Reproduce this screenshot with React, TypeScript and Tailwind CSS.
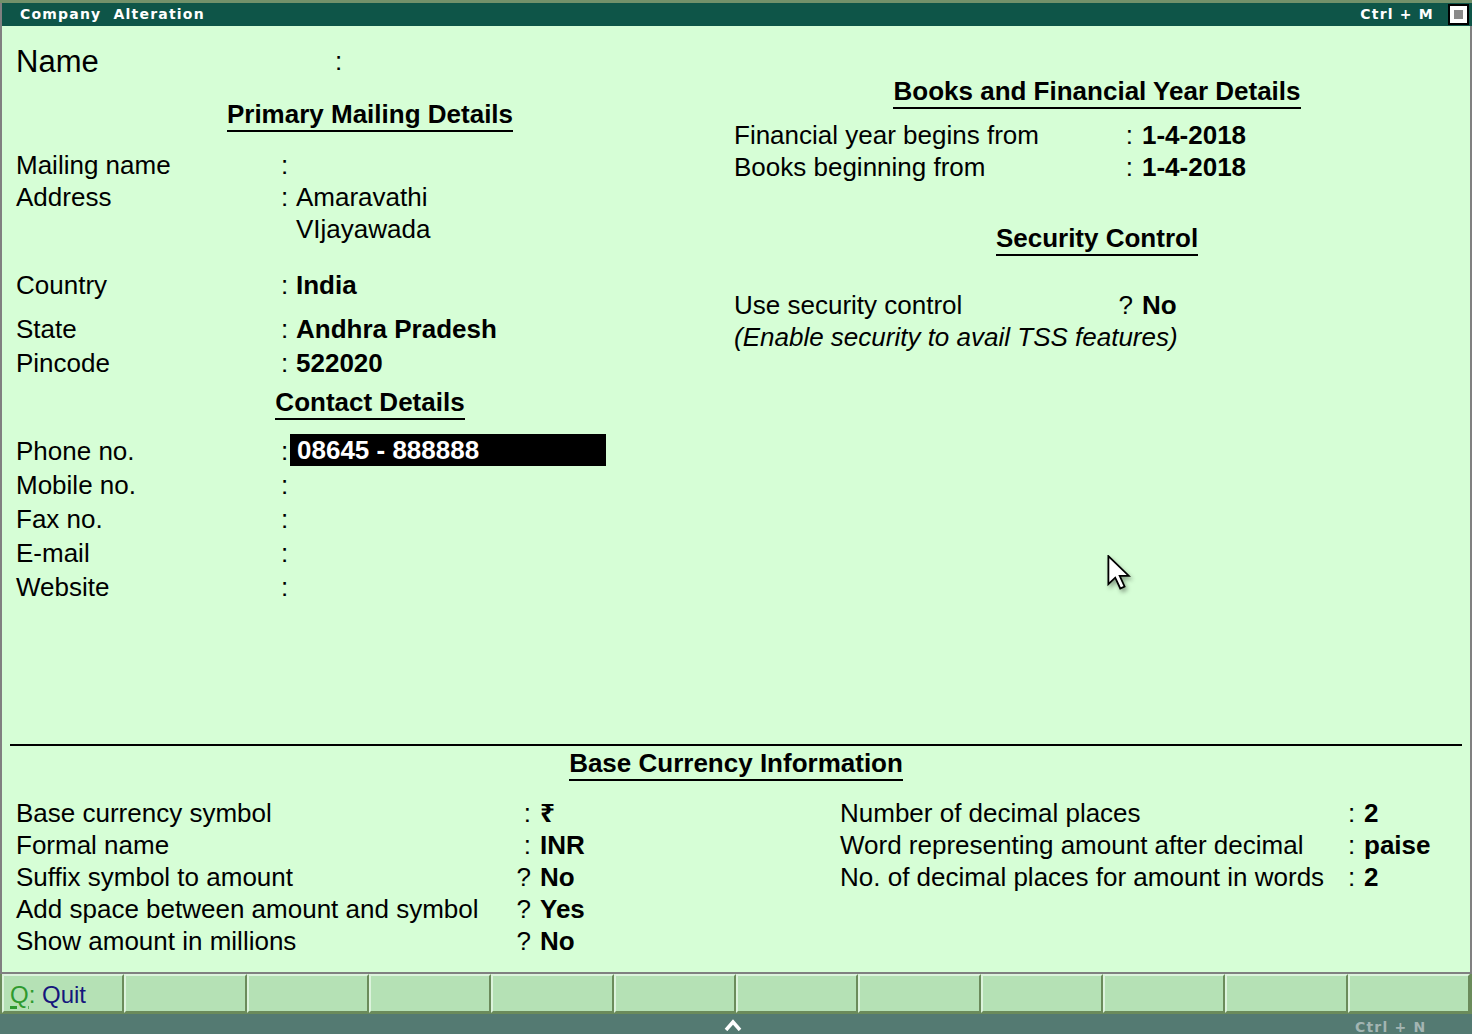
import React from "react";

const F = "font-['Liberation_Sans','Noto_Sans','DejaVu_Sans',sans-serif]";
const UI = "font-['DejaVu_Sans',sans-serif]";

function Heading({ text }: { text: string }) {
  return (
    <span className="inline-block leading-[28px] font-bold border-b-2 border-black">{text}</span>
  );
}

function LeftField({ label, value, bold }: { label: string; value?: string; bold?: boolean }) {
  return (
    <div className="flex h-[32px] items-center">
      <span className="w-[265px]">{label}</span>
      <span className="w-[15px]">:</span>
      <span className={bold ? "font-bold" : ""}>{value}</span>
    </div>
  );
}

function ContactField({ label, value }: { label: string; value?: string }) {
  return (
    <div className="flex h-[34px] items-start">
      <span className="w-[265px] leading-[34px]">{label}</span>
      <span className="w-[9px] leading-[34px]">:</span>
      {value ? (
        <span className="w-[316px] h-[32px] leading-[32px] bg-black text-white font-bold pl-[7px]">{value}</span>
      ) : null}
    </div>
  );
}

function RightField({ label, mark, value, bold = true }: { label: string; mark: string; value: string; bold?: boolean }) {
  return (
    <div className="flex h-[32px] items-center">
      <span className="w-[376px]">{label}</span>
      <span className="w-[32px] text-right pr-[9px]">{mark}</span>
      <span className={bold ? "font-bold" : ""}>{value}</span>
    </div>
  );
}

const baseLeft = [
  { label: "Base currency symbol", mark: ":", value: "₹" },
  { label: "Formal name", mark: ":", value: "INR" },
  { label: "Suffix symbol to amount", mark: "?", value: "No" },
  { label: "Add space between amount and symbol", mark: "?", value: "Yes" },
  { label: "Show amount in millions", mark: "?", value: "No" },
];

const baseRight = [
  { label: "Number of decimal places", value: "2" },
  { label: "Word representing amount after decimal", value: "paise" },
  { label: "No. of decimal places for amount in words", value: "2" },
];

export default function App() {
  return (
    <div className={`relative w-[1472px] h-[1034px] flex flex-col overflow-hidden bg-[#d6fed6] text-black ${F}`}>
      {/* top strip */}
      <div className="h-[3px] shrink-0 bg-[#72916a]" />

      {/* title bar */}
      <div className="h-[23px] shrink-0 bg-[#0e5548] flex items-center pl-[18px] pr-[3px] border-l-2 border-[#808080]">
        <span className={`${UI} font-bold text-[14px] tracking-[1.2px] text-white whitespace-pre`}>Company  Alteration</span>
        <span className={`${UI} ml-auto font-bold text-[14px] tracking-[1.2px] text-white whitespace-pre`}>Ctrl + M</span>
        <div className="ml-[14px] w-[21px] h-[21px] bg-white border-2 border-black flex items-center justify-center">
          <div className="w-[9px] h-[9px] bg-[#8a8a8a]" />
        </div>
      </div>

      {/* form body */}
      <div className="h-[946px] shrink-0 flex flex-col border-x-2 border-[#808080] text-[26px] leading-none">
        <div className="flex h-[718px] shrink-0">
          {/* left column */}
          <div className="ml-[14px] w-[708px] flex flex-col">
            <div className="mt-[17px] h-[36px] flex items-center">
              <span className="w-[319px] text-[31px]">Name</span>
              <span>:</span>
            </div>
            <div className="mt-[21px] h-[32px] flex justify-center">
              <Heading text="Primary Mailing Details" />
            </div>
            <div className="mt-[17px]">
              <LeftField label="Mailing name" />
              <LeftField label="Address" value="Amaravathi" />
              <div className="flex h-[32px] items-center pl-[280px]">VIjayawada</div>
            </div>
            <div className="mt-[24px]">
              <LeftField label="Country" value="India" bold />
            </div>
            <div className="mt-[12px]">
              <LeftField label="State" value="Andhra Pradesh" bold />
            </div>
            <div className="mt-[2px]">
              <LeftField label="Pincode" value="522020" bold />
            </div>
            <div className="mt-[9px] h-[32px] flex justify-center">
              <Heading text="Contact Details" />
            </div>
            <div className="mt-[14px]">
              <ContactField label="Phone no." value="08645 - 888888" />
              <ContactField label="Mobile no." />
              <ContactField label="Fax no." />
              <ContactField label="E-mail" />
              <ContactField label="Website" />
            </div>
          </div>

          {/* right column */}
          <div className="ml-[10px] w-[726px] flex flex-col">
            <div className="mt-[51px] h-[32px] flex justify-center">
              <Heading text="Books and Financial Year Details" />
            </div>
            <div className="mt-[10px]">
              <RightField label="Financial year begins from" mark=":" value="1-4-2018" />
              <RightField label="Books beginning from" mark=":" value="1-4-2018" />
            </div>
            <div className="mt-[41px] h-[32px] flex justify-center">
              <Heading text="Security Control" />
            </div>
            <div className="mt-[33px]">
              <RightField label="Use security control" mark="?" value="No" />
              <div className="h-[32px] flex items-center italic">(Enable security to avail TSS features)</div>
            </div>
          </div>
        </div>

        <div className="mx-[8px] h-[2px] shrink-0 bg-black" />

        {/* base currency */}
        <div className="mt-[3px] h-[32px] flex justify-center">
          <Heading text="Base Currency Information" />
        </div>
        <div className="mt-[16px] flex">
          <div className="ml-[14px] w-[824px] flex flex-col">
            {baseLeft.map((r) => (
              <div key={r.label} className="flex h-[32px] items-center">
                <span className="w-[500px]">{r.label}</span>
                <span className="w-[24px] text-right pr-[9px]">{r.mark}</span>
                <span className="font-bold">{r.value}</span>
              </div>
            ))}
          </div>
          <div className="flex flex-col">
            {baseRight.map((r) => (
              <div key={r.label} className="flex h-[32px] items-center">
                <span className="w-[508px]">{r.label}</span>
                <span className="w-[16px]">:</span>
                <span className="font-bold">{r.value}</span>
              </div>
            ))}
          </div>
        </div>
      </div>

      {/* button bar */}
      <div className="h-[2px] shrink-0 bg-[#808080]" />
      <div className="h-[40px] shrink-0 flex bg-[#6b8b5b] px-[2px] pb-[1px]">
        {Array.from({ length: 12 }).map((_, i) => (
          <div
            key={i}
            className="flex-1 flex items-center bg-[#b5e1b5] border-t-2 border-l-2 border-t-[#dcf3dc] border-l-[#dcf3dc] border-r-2 border-r-[#6b8b5b] border-b-2 border-b-[#6b8b5b] pl-[6px] pt-[3px] text-[24px]"
          >
            {i === 0 ? (
              <span>
                <span className="text-[#2f9a2f] underline decoration-[3px] underline-offset-[3px]">Q</span>
                <span className="text-[#2f9a2f]">:</span>
                <span className="text-[#16167c]"> Quit</span>
              </span>
            ) : null}
          </div>
        ))}
      </div>

      {/* bottom strip */}
      <div className="h-[20px] shrink-0 bg-[#547a72] flex items-start">
        <div className="ml-[724px] mt-[5px]">
          <svg width="18" height="12" viewBox="0 0 18 12">
            <path d="M2 11 L9 3 L16 11" fill="none" stroke="white" strokeWidth="3.5" />
          </svg>
        </div>
        <span className={`${UI} ml-[613px] mt-[3px] font-bold text-[14px] tracking-[1.2px] text-[#a3b5b2] whitespace-pre`}>Ctrl + N</span>
      </div>

      {/* mouse pointer */}
      <svg className="absolute left-[1107px] top-[555px] drop-shadow-[2px_3px_2px_rgba(0,0,0,0.35)]" width="24" height="36" viewBox="0 0 13 20">
        <path d="M0.6 0.6 L0.6 16.2 L4.4 12.6 L7.2 18.6 L9.6 17.5 L6.9 11.6 L12 11.6 Z" fill="white" stroke="black" strokeWidth="1" strokeLinejoin="miter" />
      </svg>
    </div>
  );
}
